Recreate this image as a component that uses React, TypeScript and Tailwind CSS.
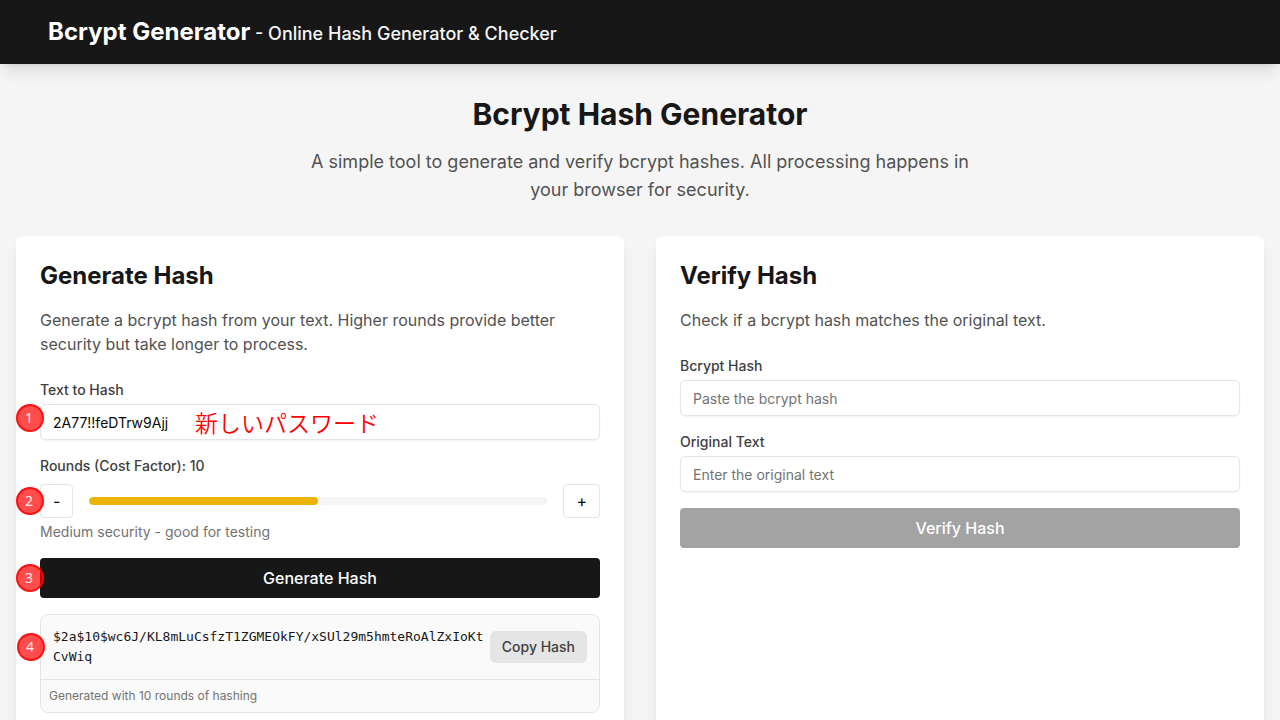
import { useState } from "react";
import type { ReactNode } from "react";

const HASH = "$2a$10$wc6J/KL8mLuCsfzT1ZGMEOkFY/xSUl29m5hmteRoAlZxIoKtCvWiq";

const labelClass = "mb-1 block text-sm font-medium text-neutral-700";
const inputClass =
  "block h-9 w-full rounded-md border border-neutral-200 bg-white px-3 text-sm text-neutral-950 shadow-xs placeholder:text-neutral-500";
const stepClass =
  "rounded-sm border border-neutral-200 bg-white px-3 py-1 text-base text-neutral-950";

function Marker({ children }: { children: ReactNode }) {
  return (
    <span className="absolute -left-6 flex size-7 items-center justify-center rounded-full border-2 border-[#ff0000]/80 bg-[#ff0000]/70 pr-0.5 font-['Noto_Sans',sans-serif] text-sm text-white/90">
      {children}
    </span>
  );
}

function Card({ title, intro, children }: { title: string; intro: string; children: ReactNode }) {
  return (
    <section className="rounded-lg bg-white p-6 shadow-lg">
      <h2 className="mb-4 text-2xl font-bold text-neutral-900">{title}</h2>
      <p className="mb-6 text-base text-neutral-600">{intro}</p>
      {children}
    </section>
  );
}

export default function App() {
  const [text, setText] = useState("2A77!!feDTrw9Ajj");
  const [rounds, setRounds] = useState(10);
  const [hash, setHash] = useState("");
  const [original, setOriginal] = useState("");

  return (
    <div className="min-h-screen bg-neutral-100 font-['Inter',sans-serif]">
      <header className="relative flex h-16 items-center bg-neutral-900 px-12 text-white shadow-lg">
        <a href="#" className="text-2xl font-bold">
          Bcrypt Generator
          <span className="text-lg font-medium text-neutral-100"> - Online Hash Generator &amp; Checker</span>
        </a>
      </header>

      <main className="px-4 py-8">
        <div className="mb-8 text-center">
          <h1 className="mb-4 text-3xl font-bold text-neutral-900">Bcrypt Hash Generator</h1>
          <p className="mx-auto max-w-2xl text-lg text-neutral-600">
            A simple tool to generate and verify bcrypt hashes. All processing happens in your browser for security.
          </p>
        </div>

        <div className="grid grid-cols-2 gap-8">
          <Card
            title="Generate Hash"
            intro="Generate a bcrypt hash from your text. Higher rounds provide better security but take longer to process."
          >
            <div className="mb-4">
              <label htmlFor="plain" className={labelClass}>Text to Hash</label>
              <div className="relative">
                <input id="plain" className={inputClass} value={text} onChange={(e) => setText(e.target.value)} />
                <div className="absolute top-0 left-0">
                  <Marker>1</Marker>
                </div>
                <span className="pointer-events-none absolute inset-y-0 left-[155px] flex items-center font-['Noto_Sans_CJK_JP',sans-serif] text-[23px] font-[350] text-[#ff0000]">
                  新しいパスワード
                </span>
              </div>
            </div>

            <div className="mb-4">
              <div className="mb-2 text-sm font-medium text-neutral-700">Rounds (Cost Factor): {rounds}</div>
              <div className="relative flex items-center gap-4">
                <button type="button" aria-label="Fewer rounds" className={stepClass} onClick={() => setRounds(Math.max(4, rounds - 1))}>
                  -
                </button>
                <div className="h-2 flex-1 overflow-hidden rounded-full bg-neutral-100">
                  <div className="h-full rounded-full bg-[#eab308]" style={{ width: `${rounds * 5}%` }} />
                </div>
                <button type="button" aria-label="More rounds" className={stepClass} onClick={() => setRounds(Math.min(20, rounds + 1))}>
                  +
                </button>
                <Marker>2</Marker>
              </div>
              <p className="mt-1 text-sm text-neutral-500">Medium security - good for testing</p>
            </div>

            <div className="relative mb-4 flex items-center">
              <button type="button" className="h-10 w-full rounded-sm bg-neutral-900 text-base font-medium text-white">
                Generate Hash
              </button>
              <Marker>3</Marker>
            </div>

            <div className="rounded-lg border border-neutral-200 bg-neutral-50">
              <div className="relative flex items-center gap-1 p-3">
                <code className="min-w-0 flex-1 font-['DejaVu_Sans_Mono',monospace] text-[13px] leading-5 break-all text-neutral-900">
                  {HASH}
                </code>
                <button type="button" className="shrink-0 rounded-md bg-neutral-200 px-3 py-1.5 text-sm font-medium text-neutral-700">
                  Copy Hash
                </button>
                <Marker>4</Marker>
              </div>
              <p className="border-t border-neutral-200 p-2 text-xs text-neutral-500">Generated with 10 rounds of hashing</p>
            </div>
          </Card>

          <Card title="Verify Hash" intro="Check if a bcrypt hash matches the original text.">
            <div className="mb-4">
              <label htmlFor="hash" className={labelClass}>Bcrypt Hash</label>
              <input id="hash" className={inputClass} placeholder="Paste the bcrypt hash" value={hash} onChange={(e) => setHash(e.target.value)} />
            </div>
            <div className="mb-4">
              <label htmlFor="original" className={labelClass}>Original Text</label>
              <input id="original" className={inputClass} placeholder="Enter the original text" value={original} onChange={(e) => setOriginal(e.target.value)} />
            </div>
            <button
              type="button"
              disabled={!hash || !original}
              className="h-10 w-full rounded-sm bg-neutral-900 text-base font-medium text-white disabled:bg-[#a3a3a3]"
            >
              Verify Hash
            </button>
          </Card>
        </div>
      </main>
    </div>
  );
}
